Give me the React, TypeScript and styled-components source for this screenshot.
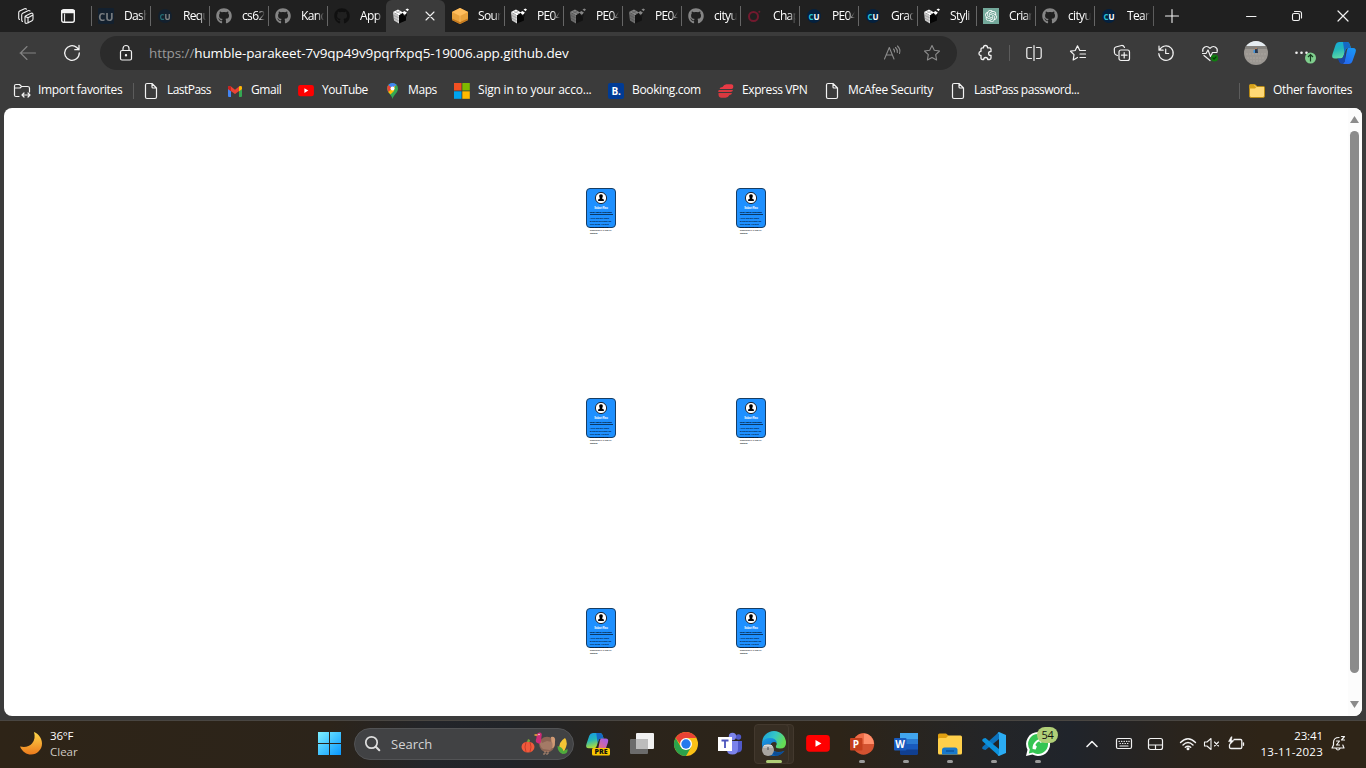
import React from "react";
import styled, { createGlobalStyle } from "styled-components";
import { FaGithub, FaPhoneAlt } from "react-icons/fa";
import { SiOpenai } from "react-icons/si";

const GlobalStyle = createGlobalStyle`
  * { box-sizing: border-box; }
  body { margin: 0; background: #3b3b3b; overflow: hidden; }
  svg { display: block; flex: none; overflow: visible; }
`;

const Screen = styled.div`
  width: 1366px;
  height: 768px;
  display: flex;
  flex-direction: column;
  font-family: "Open Sans", "Noto Sans", sans-serif;
  font-size: 12px;
  color: #fff;
  background: #3b3b3b;
  overflow: hidden;
  white-space: nowrap;
`;

/* ---------- tab strip ---------- */
const TabStrip = styled.div`
  height: 32px;
  display: flex;
  background: #202020;
`;
const StripButton = styled.div<{ $w: number }>`
  width: ${(p) => p.$w}px;
  height: 32px;
  display: flex;
  align-items: center;
  justify-content: center;
`;
const Tab = styled.div<{ $active?: boolean; $sep?: boolean }>`
  width: 59px;
  height: 32px;
  display: flex;
  align-items: center;
  padding-left: 7px;
  background: ${(p) => (p.$active ? "#3b3b3b" : "transparent")};
  border-radius: ${(p) => (p.$active ? "6px 6px 0 0" : "0")};
  background-image: ${(p) =>
    p.$sep ? "linear-gradient(#666, #666)" : "none"};
  background-size: 1px 20px;
  background-position: 0 6px;
  background-repeat: no-repeat;
`;
const TabTitle = styled.span`
  width: 23px;
  margin-left: 10px;
  overflow: hidden;
  line-height: 20px;
  letter-spacing: -0.65px;
  mask-image: linear-gradient(90deg, #000 70%, transparent 100%);
`;
const Favicon = styled.div<{ $dim?: boolean }>`
  width: 16px;
  height: 16px;
  flex: none;
  display: flex;
  align-items: center;
  justify-content: center;
  opacity: ${(p) => (p.$dim ? 0.45 : 1)};
`;
const CuBadge = styled.div<{ $square?: boolean }>`
  width: ${(p) => (p.$square ? 16 : 14)}px;
  height: ${(p) => (p.$square ? 16 : 14)}px;
  border-radius: ${(p) => (p.$square ? "1px" : "50%")};
  background: #04213f;
  display: flex;
  align-items: center;
  justify-content: center;
  font: 700 ${(p) => (p.$square ? 11 : 8)}px "Open Sans", sans-serif;
  color: ${(p) => (p.$square ? "#e0eaf2" : "#fff")};
`;
const Teal = styled.span`
  color: #27c4d6;
`;

/* ---------- toolbar ---------- */
const Toolbar = styled.div`
  height: 42px;
  display: flex;
  align-items: center;
`;
const Slot = styled.div<{ $w?: number }>`
  width: ${(p) => p.$w ?? 44}px;
  height: 42px;
  flex: none;
  display: flex;
  align-items: center;
  justify-content: center;
`;
const AddressBar = styled.div`
  width: 857px;
  height: 34px;
  margin: 0 7px 0 6px;
  border-radius: 17px;
  background: #2b2b2b;
  display: flex;
  align-items: center;
  padding: 0 5px 0 18px;
`;
const Url = styled.div`
  flex: 1;
  margin-left: 15px;
  font-size: 13.5px;
  line-height: 20px;
  letter-spacing: -0.1px;
`;
const Muted = styled.span`
  color: #9a9a9a;
`;
const Rule = styled.div<{ $l: number; $r: number; $h?: number }>`
  width: 1px;
  height: ${(p) => p.$h ?? 16}px;
  margin: 0 ${(p) => p.$r}px 0 ${(p) => p.$l}px;
  background: #5c5c5c;
`;
const StripRule = styled(Rule)`
  margin-top: 6px;
`;
const Avatar = styled.div`
  width: 24px;
  height: 24px;
  border-radius: 50%;
  overflow: hidden;
`;

/* ---------- favourites bar ---------- */
const FavBar = styled.div`
  height: 34px;
  display: flex;
  align-items: center;
  padding-left: 14px;
`;
const Fav = styled.div<{ $w: number; $ls?: number }>`
  width: ${(p) => p.$w}px;
  flex: none;
  display: flex;
  align-items: center;
  gap: 8px;
  letter-spacing: ${(p) => p.$ls ?? -0.35}px;
`;
const FavLabel = styled.span`
  line-height: 18px;
  padding-bottom: 2px;
`;
const BookingMark = styled.div`
  width: 16px;
  height: 16px;
  border-radius: 2px;
  background: #003b95;
  font-weight: 700;
  font-size: 10px;
  line-height: 16px;
  text-align: center;
`;

/* ---------- page ---------- */
const Page = styled.div`
  width: 1358px;
  height: 608px;
  margin-left: 4px;
  border-radius: 8px;
  background: #fff;
  display: flex;
  overflow: hidden;
`;
const Content = styled.div`
  flex: 1;
  display: grid;
  grid-template-columns: 30px 30px;
  grid-auto-rows: 40px;
  column-gap: 120px;
  row-gap: 170px;
  padding: 80px 0 0 582px;
`;
const Card = styled.div`
  width: 30px;
  height: 40px;
  border: 1px solid #173d63;
  border-radius: 4px;
  background: #1e90ff;
  display: flex;
  flex-direction: column;
  align-items: center;
  font-family: "Liberation Sans", sans-serif;
  color: #020a14;
`;
const CardPhoto = styled.div`
  margin-top: 3px;
  height: 12px;
`;
const CardName = styled.div`
  margin-top: 2px;
  font-size: 2.6px;
  line-height: 5px;
  font-weight: 700;
  color: #fff;
`;
const CardRole = styled.div`
  width: 23px;
  font-size: 2px;
  line-height: 3px;
  font-weight: 700;
  text-align: center;
  border-bottom: 1px solid #0b3a68;
  -webkit-text-stroke: 0.06px #020a14;
`;
const CardText = styled.div`
  width: 22px;
  margin-top: 2px;
  font-size: 2px;
  line-height: 2.9px;
  white-space: pre;
  -webkit-text-stroke: 0.03px #020a14;
`;
const Scrollbar = styled.div`
  width: 14px;
  background: #fcfcfc;
  display: flex;
  flex-direction: column;
  align-items: center;
  padding: 8px 1px 0 0;
`;
const Thumb = styled.div`
  width: 9px;
  height: 542px;
  margin: 8px 0 28px;
  border-radius: 5px;
  background: #8b8b8b;
`;

/* ---------- taskbar ---------- */
const Taskbar = styled.div`
  height: 48px;
  margin-top: 4px;
  padding-bottom: 2px;
  display: flex;
  align-items: center;
  border-top: 1px solid #494642;
  background: linear-gradient(
    90deg,
    #2e2417 0,
    #2c241a 330px,
    #23252a 430px,
    #212429 510px,
    #2b241b 640px,
    #2d2418 840px,
    #242527 985px,
    #20242b 1070px,
    #2a241d 1180px,
    #2e2417 1260px
  );
`;
const Weather = styled.div`
  width: 307px;
  padding-left: 19px;
  display: flex;
  align-items: center;
  gap: 8px;
`;
const WeatherText = styled.div`
  font-size: 11.5px;
  line-height: 16px;
  letter-spacing: -0.2px;
`;
const Soft = styled.div`
  color: #cfcac4;
  letter-spacing: 0;
`;
const Search = styled.div`
  width: 220px;
  height: 32px;
  margin: 0 2px 0 3px;
  padding: 0 4px 0 10px;
  border-radius: 16px;
  background: #414244;
  border: 1px solid #525355;
  display: flex;
  align-items: center;
  font-size: 13px;
  color: #d4d4d4;
`;
const SearchLabel = styled.span`
  flex: 1;
  margin-left: 11px;
`;
const TaskApp = styled.div<{ $active?: boolean; $dot?: boolean }>`
  width: 44px;
  height: 46px;
  flex: none;
  position: relative;
  display: flex;
  align-items: center;
  justify-content: center;
  &::after {
    content: "";
    position: absolute;
    bottom: 4px;
    left: ${(p) => (p.$active ? 14 : 19)}px;
    width: ${(p) => (p.$active ? 16 : 6)}px;
    height: 3px;
    border-radius: 2px;
    background: ${(p) =>
      p.$active ? "#b0cf78" : p.$dot ? "#9a9a9a" : "transparent"};
  }
`;
const ActiveFrame = styled.div<{ $back?: boolean }>`
  position: absolute;
  left: ${(p) => (p.$back ? 7 : 2)}px;
  top: 3px;
  width: 35px;
  height: 40px;
  border-radius: 4px;
  background: #372e23;
  border: 1px solid #43392e;
`;
const Over = styled.div`
  position: relative;
`;
const Count = styled.div`
  position: absolute;
  left: 21px;
  top: 6px;
  width: 21px;
  height: 16px;
  border-radius: 8px;
  background: #b0cf78;
  color: #111;
  font-size: 11px;
  line-height: 16px;
  text-align: center;
  letter-spacing: -0.3px;
`;
const Tray = styled.div`
  margin-left: 16px;
  display: flex;
  align-items: center;
`;
const Clock = styled.div`
  width: 75px;
  text-align: right;
  font-size: 11.5px;
  line-height: 16px;
  margin-right: 3px;
`;
const Digits = styled.div<{ $ls: number }>`
  letter-spacing: ${(p) => p.$ls}px;
`;

const Line = ({ w = 18, h = 18, c = "#f2f2f2", s = 1.2, children }: any) => (
  <svg width={w} height={h} viewBox={`0 0 ${w} ${h}`} fill="none" stroke={c} strokeWidth={s} strokeLinecap="round" strokeLinejoin="round">
    {children}
  </svg>
);

const Expo = () => (
  <svg width="16" height="16" viewBox="0 0 16 16">
    <path d="M0 4 5 1.500 10 4.500 6 7.500z" fill="#fff" />
    <path d="M0 4 6 7.500V15.500L1 12.500z" fill="#dedede" />
    <path d="M6 7.500 10 5v2l3 1.500v4L6 15.500z" fill="#050505" />
    <path d="M2 5v8M4 6.200v8M0 7l6 3M.5 10l5.500 3M2.500 2.800l5.500 3M7.500 2.800l-5 2.700" stroke="#808080" strokeWidth=".5" />
    <path d="M9 4.500 11.500 3l2.500 1.800-2 2.200zM12.500 1.500 14.300.6 16 1.500l-1.500 1.700z" fill="#fff" />
    <path d="M12 7 14 5v3l-2 1.500z" fill="#111" />
  </svg>
);
const Cube = () => (
  <svg width="16" height="16" viewBox="0 0 16 16">
    <path d="M8 0 16 4v8l-8 4-8-4V4z" fill="#e9a23c" />
    <path d="M8 0 16 4 8 8 0 4z" fill="#ffbd5c" />
    <path d="M0 10.500 8 14l8-3.500V12l-8 4-8-4z" fill="#c67a1e" />
    <path d="M8 8v6" stroke="#f5b65a" />
  </svg>
);
const Gpt = styled.div`
  width: 16px;
  height: 16px;
  background: #74a99b;
  color: #fff;
  display: flex;
  align-items: center;
  justify-content: center;
`;
const Chapter = () => (
  <svg width="16" height="16" viewBox="0 0 16 16" fill="none" stroke="#d5123f">
    <circle cx="6.500" cy="8.500" r="4.500" strokeWidth="2" />
    <circle cx="12.300" cy="3.800" r="1" fill="#c5123f" stroke="none" />
  </svg>
);
const Doc = () => (
  <Line w={16} h={16}>
    <path d="M2.500 2Q2.500.5 4 .5h5l4.500 4.500v9q0 1.500-1.500 1.500H4q-1.500 0-1.500-1.500zM9 .5V4q0 1 1 1h3.500" />
  </Line>
);
const YouTube = ({ w = 16 }: { w?: number }) => (
  <svg width={w} height={w * 0.7} viewBox="0 0 24 17">
    <rect width="24" height="17" rx="3.500" fill="#f00" />
    <path d="M9.500 5v7l6-3.500z" fill="#fff" />
  </svg>
);
const Gmail = () => (
  <svg width="14" height="11" viewBox="0 0 14 11">
    <path d="M0 2v8q0 1 1 1h2V4z" fill="#4285f4" />
    <path d="M14 2v8q0 1-1 1h-2V4z" fill="#34a853" />
    <path d="M0 1.500Q.5-.8 3 .6L7 3.700 11 .6q2.500-1.400 3 .9V3L7 8 0 3z" fill="#ea4335" />
    <path d="M11 .6q2.500-1.400 3 .9V3l-3 2.200z" fill="#fbbc04" />
    <path d="M0 1.500Q.5-.8 3 .6v4.600L0 3z" fill="#c5221f" />
  </svg>
);
const Pin = () => (
  <svg width="11" height="16" viewBox="0 0 11 16">
    <path d="M5.500 0A5.500 5.500 0 0 1 11 5.500C11 10 7 11 5.500 16 4.500 11 0 10 0 5.500A5.500 5.500 0 0 1 5.500 0z" fill="#34a853" />
    <path d="M1.300 2A5.500 5.500 0 0 1 9.500 1.800L5 7z" fill="#4285f4" />
    <path d="M1.300 2 5 5 1.500 9.500Q-1 5 1.300 2z" fill="#ea4335" />
    <path d="M1.300 9 8 2.500 7 8 3.500 11.500z" fill="#fbbc04" />
    <circle cx="5.500" cy="5.500" r="2" fill="#fff" />
  </svg>
);
const Ms = () => (
  <svg width="16" height="16" viewBox="0 0 16 16">
    <path d="M0 0h7.500v7.500H0z" fill="#f25022" />
    <path d="M8.300 0h7.500v7.500H8.300z" fill="#7fba00" />
    <path d="M0 8.300h7.500v7.500H0z" fill="#00a4ef" />
    <path d="M8.300 8.300h7.500v7.500H8.300z" fill="#ffb900" />
  </svg>
);
const Vpn = () => (
  <svg width="16" height="14" viewBox="0 0 16 14">
    <path d="M4.500 3Q6 .3 8.500.3h4.700q2.300 0 2.100 2.700 0 2-2 2H1.500Q2 3 4.500 3z" fill="#e83a45" />
    <path d="M1 6h14q-.3 2-2.500 2H.2Q.3 6 1 6zM.5 9H14q-.4 2-2.500 2-1.500 2.700-4 2.700H3Q.2 13.500.5 9z" fill="#da3940" />
  </svg>
);
const Folder = () => (
  <svg width="16" height="14" viewBox="0 0 16 14">
    <path d="M.5 1.500q0-1 1-1H6L8 2.500h6.500q1 0 1 1V12q0 1.500-1.500 1.500H2Q.5 13.500.5 12z" fill="#ffd875" stroke="#b98a12" />
    <path d="M.5 4.500H6L8 2.500H6L5 .5H1.500q-1 0-1 1z" fill="#d7a21b" />
  </svg>
);
const Copilot = ({ s = 24, warm }: { s?: number; warm?: boolean }) => (
  <svg width={s} height={s} viewBox="0 0 24 24">
    <defs>
      <linearGradient id={warm ? "w1" : "c1"} x2=".3" y2="1">
        <stop stopColor={warm ? "#1598e8" : "#12a8e0"} />
        <stop offset=".5" stopColor="#24b6b8" />
        <stop offset="1" stopColor={warm ? "#b3dd38" : "#5ed8a5"} />
      </linearGradient>
      <linearGradient id={warm ? "w2" : "c2"} x1="1" x2=".4" y2="1">
        <stop stopColor={warm ? "#9b5cf5" : "#179cf5"} />
        <stop offset="1" stopColor={warm ? "#f97367" : "#246bf0"} />
      </linearGradient>
    </defs>
    <path d="M11 1h4q2 0 2.600 2L19 7h-3q-2 0-2.500 2L11.500 15q-.8 2.500-3 2.500H3q-4 0-2.500-4.500L3.500 4q1-3 4-3z" fill={`url(#${warm ? "w1" : "c1"})`} />
    <path d="M11 1h4q2 0 2.600 2L19 7h-3q-2 0-2.500 2L12.500 12z" fill="#1568c4" />
    <path d="M16 7h5q4 0 2.500 4.500L20.500 20q-1 3-4 3H10q2-.5 2.600-2.500L15 9z" fill={`url(#${warm ? "w2" : "c2"})`} />
    {!warm && <path d="M5 17.500h3.500q2.200 0 3-2.500l2-6-.5 11q-1.500 4-4.500 2.500Q7 22 6.500 19z" fill="#1747a6" />}
  </svg>
);
const Person = () => (
  <svg width="12" height="12" viewBox="0 0 12 12">
    <circle cx="6" cy="6" r="5.600" fill="#fff" stroke="#12161c" strokeWidth=".9" />
    <path d="M6 2.200c1.300 0 1.900.9 1.800 2.100-.1 1-.6 1.600-.8 2.200l1.500.8q.5.400.4 1.600H3.100q-.1-1.200.4-1.600l1.500-.8c-.2-.6-.7-1.200-.8-2.200C4.100 3.100 4.700 2.200 6 2.200z" fill="#000" />
  </svg>
);

type TabInfo = { t?: string; k: string; dim?: boolean; sep?: boolean };
const tabs: TabInfo[] = [
  { t: "Dash", k: "cusq", dim: true, sep: true },
  { t: "Requ", k: "cu", dim: true, sep: true },
  { t: "cs62", k: "gh", sep: true },
  { t: "Kand", k: "gh", sep: true },
  { t: "App", k: "ghd", sep: true },
  { k: "active" },
  { t: "Sour", k: "cube" },
  { t: "PE04", k: "expo", sep: true },
  { t: "PE04", k: "expo", dim: true, sep: true },
  { t: "PE04", k: "expo", dim: true, sep: true },
  { t: "cityu", k: "gh", sep: true },
  { t: "Chap", k: "ch", dim: true, sep: true },
  { t: "PE04", k: "cu", sep: true },
  { t: "Grad", k: "cu", sep: true },
  { t: "Styli", k: "expo", sep: true },
  { t: "Criar", k: "gpt", sep: true },
  { t: "cityu", k: "gh", sep: true },
  { t: "Team", k: "cu", sep: true },
];
const tabIcon = (k: string) => {
  if (k === "gh") return <FaGithub size={16} color="#858585" />;
  if (k === "ghd") return <FaGithub size={16} color="#101010" />;
  if (k === "cube") return <Cube />;
  if (k === "ch") return <Chapter />;
  if (k === "gpt") return <Gpt><SiOpenai size={12} /></Gpt>;
  if (k === "cu") return <CuBadge><Teal>C</Teal>U</CuBadge>;
  if (k === "cusq") return <CuBadge $square>CU</CuBadge>;
  return <Expo />;
};

const favs = [
  { t: "LastPass", w: 84, i: <Doc />, ls: -0.55 },
  { t: "Gmail", w: 71, i: <Gmail />, ls: -0.45 },
  { t: "YouTube", w: 86, i: <YouTube />, ls: -0.5 },
  { t: "Maps", w: 70, i: <Pin />, ls: -0.4 },
  { t: "Sign in to your acco...", w: 154, i: <Ms />, ls: -0.2 },
  { t: "Booking.com", w: 110, i: <BookingMark>B.</BookingMark>, ls: -0.35 },
  { t: "Express VPN", w: 106, i: <Vpn />, ls: -0.4 },
  { t: "McAfee Security", w: 126, i: <Doc />, ls: -0.3 },
  { t: "LastPass password...", w: 289, i: <Doc />, ls: -0.5 },
];

const about = "I have two daily goals,\nto provide developer the\nlearn things. It is built,\nlearn new things and\nexperience in UI and UX\nfrontend";

export default function App() {
  return (
    <Screen>
      <GlobalStyle />
      <TabStrip>
        <StripButton $w={52}>
          <Line w={16} h={16} s={1.1}>
            <path d="M7.500 8 12.500 5.500q2.500-1 2.500 1V11q0 1.200-1 1.700L9.500 15Q7 16 7 14V9q0-.7.500-1zM7.300 8.500 10 9.800l4.500-2.500M10 9.800V15M4.500 13.500Q3.700 13 3.700 12V7q0-1.200 1-1.700L10 2.700q1.200-.5 2 .3M1.500 11.500Q.7 11 .7 10V4.700Q.7 3.500 1.700 3L6.500.8Q7.700.3 8.500 1.200" />
          </Line>
        </StripButton>
        <StripButton $w={32}>
          <Line w={14} h={14} s={1.4}>
            <rect x=".7" y=".7" width="12.600" height="12.600" rx="2" />
            <path d="M1 3.200h12M1 2h12" strokeWidth="2" />
            <path d="M3.600 5v8" strokeWidth="1" />
          </Line>
        </StripButton>
        <StripButton $w={7} />
        {tabs.map((tab, n) =>
          tab.k === "active" ? (
            <Tab key={n} $active>
              <Favicon><Expo /></Favicon>
              <StripButton $w={7} />
              <StripButton $w={36}>
                <Line w={8} h={8} s={1.1}><path d="M0 0l8 8M8 0 0 8" /></Line>
              </StripButton>
            </Tab>
          ) : (
            <Tab key={n} $sep={tab.sep}>
              <Favicon $dim={tab.dim}>{tabIcon(tab.k)}</Favicon>
              <TabTitle>{tab.t}</TabTitle>
            </Tab>
          )
        )}
        <StripRule $l={0} $r={0} $h={20} />
        <StripButton $w={36}>
          <Line w={14} h={14} s={1.1}><path d="M7 .5v13M.5 7h13" /></Line>
        </StripButton>
        <StripButton $w={38} />
        <StripButton $w={46}><Line w={10} h={10} s={1}><path d="M.5 5.500h9.500" /></Line></StripButton>
        <StripButton $w={46}>
          <Line w={10} h={10} s={1.1}>
            <rect x=".5" y="2.500" width="7" height="7" rx="1.500" />
            <path d="M2.500.5H7.500Q9.500.5 9.500 2.500V7" />
          </Line>
        </StripButton>
        <StripButton $w={46}><Line w={10} h={10} s={1.2}><path d="M0 0l10 10M10 0 0 10" /></Line></StripButton>
      </TabStrip>

      <Toolbar>
        <Slot $w={56}>
          <Line w={16} h={14} c="#838383" s={1.1}><path d="M0 7h15.500M7 .5.5 7 7 13.500" /></Line>
        </Slot>
        <Slot $w={32}>
          <Line w={16} h={16} s={1.3}>
            <path d="M15.300 8A7.300 7.300 0 1 1 12.800 2.500L15 4.700M15 .5V4.700H10.800" />
          </Line>
        </Slot>
        <Slot $w={6} />
        <AddressBar>
          <Line w={16} h={16}>
            <rect x="2.500" y="5.500" width="11" height="9.500" rx="1.500" />
            <path d="M5 5.500V3.500a3 3 0 0 1 6 0v2" />
            <circle cx="8" cy="10.200" r=".6" fill="#fff" />
          </Line>
          <Url><Muted>https://</Muted>humble-parakeet-7v9qp49v9pqrfxpq5-19006.app.github.dev</Url>
          <Slot $w={40}>
            <Line w={16} h={14} c="#8c8c8c" s={1.1}>
              <path d="M.5 13 5.300 1.500 10 13M2.300 9h6M9.500 3q1.300 1.200 1 3M11.500 1.500Q14 4 13.300 6.500M13.500 0Q17 3.500 15.500 7.500" />
            </Line>
          </Slot>
          <Slot $w={40}>
            <Line w={16} h={16} c="#8c8c8c" s={1.1}>
              <path d="M8 .5 10.300 5.300l5.200.7-3.800 3.700.9 5.300L8 12.500 3.400 15l.9-5.300L.5 6l5.200-.7z" />
            </Line>
          </Slot>
        </AddressBar>
        <Slot>
          <Line w={16} h={16} s={1.3}>
            <path d="M5.500 2.800V2.500a2 2 0 0 1 4.000 0v.3H11.500q1.500 0 1.500 1.500V6.500h-.5a1.900 1.900 0 0 0 0 3.800H13v2.700q0 1.500-1.500 1.500H9.700a2 2 0 0 0-4.000 0H4.500Q3 14.500 3 13v-2.500H2.500a2.200 2.200 0 0 1 0-4.200H3V4.300q0-1.500 1.500-1.500z" />
          </Line>
        </Slot>
        <Rule $l={1} $r={2} />
        <Slot>
          <Line w={16} h={16} s={1.2}>
            <path d="M5.500 2.500H2.500Q.8 2.500.8 4.200v7.600q0 1.700 1.700 1.700h3M10.500 2.500h3q1.700 0 1.700 1.700v7.600q0 1.700-1.700 1.700h-3M8 .5v15" />
          </Line>
        </Slot>
        <Slot>
          <Line w={16} h={16} s={1.2}>
            <path d="M15.500 5.500H9.800L7.500.800 5.200 5.500.5 6.200 4 9.600 3.200 15 7.500 12.500M10 9h5.500M10 12.500h5.500" />
          </Line>
        </Slot>
        <Slot>
          <Line w={16} h={16} s={1.2}>
            <rect x="5" y="5" width="10.500" height="10.500" rx="2" />
            <path d="M10.200 7.500v5.500M7.500 10.200H13M3.500 10.500 2.200 10Q.8 9.500.5 8L.3 4Q.3 2.500 1.800 2L7.500.5Q9.500.2 10.500 2.500" />
          </Line>
        </Slot>
        <Slot>
          <Line w={16} h={16} s={1.2}>
            <path d="M1.500 5A7.200 7.200 0 1 1 .8 8.500M1 1v4.200h4.200M7.700 4v4.500h3" />
          </Line>
        </Slot>
        <Slot>
          <Line w={16} h={16} s={1.2}>
            <path d="M.8 6.500C0 2.500 4.500-.5 8 3.300 11.500-.5 16 2.500 15.200 6.500M.5 8.500h3.500l2-3.500 2.500 6.500 2-4h4.500M2 10.500 8 15.500" />
            <circle cx="12.500" cy="13" r="3.600" fill="#107c10" stroke="none" />
            <path d="M11 13l1 1 2-2" stroke="#063d06" />
          </Line>
        </Slot>
        <Slot $w={48}>
          <Avatar>
            <svg width="24" height="24" viewBox="0 0 24 24">
              <path d="M0 0h24v24H0z" fill="#9b9792" />
              <path d="M0 0h24v5H0z" fill="#e6edf2" />
              <path d="M0 5h24v3H0z" fill="#83817d" />
              <path d="M2 13h21M3 17h18M6 20h12" stroke="#aaa59f" strokeDasharray="2 1" />
              <path d="M11 7.500h2.500l.5 4.500h-3z" fill="#253750" />
              <path d="M9.500 9h1.500v3H9.500z" fill="#3f93dd" />
              <circle cx="12" cy="7.500" r=".8" fill="#d88d56" />
            </svg>
          </Avatar>
        </Slot>
        <Slot>
          <svg width="20" height="20" viewBox="0 0 20 20">
            <g fill="#f2f2f2"><circle cx="4.500" cy="9.700" r="1.300" /><circle cx="9.500" cy="9.700" r="1.300" /><circle cx="14.500" cy="9.700" r="1.300" /></g>
            <circle cx="18.500" cy="15" r="5.500" fill="#7fce8d" />
            <path d="M18.500 18.500V12M16 14l2.500-2.500L21 14" stroke="#173c20" fill="none" strokeWidth="1.200" />
          </svg>
        </Slot>
        <Slot $w={40}><Copilot /></Slot>
      </Toolbar>

      <FavBar>
        <Fav $w={119} $ls={-0.35}>
          <Favicon>
            <Line w={16} h={14}>
              <path d="M5 12.500H2Q.5 12.500.5 11V2Q.5.5 2 .5H5.500L7.500 2.500H13.500Q15.500 2.500 15.500 4V8M.5 4H6L7.500 2.500M8 11h8M10 9l-2 2 2 2M14 9l2 2-2 2" />
            </Line>
          </Favicon>
          <FavLabel>Import favorites</FavLabel>
        </Fav>
        <Rule $l={0} $r={9} />
        {favs.map((f, n) => (
          <Fav key={n} $w={f.w} $ls={f.ls}><Favicon>{f.i}</Favicon><FavLabel>{f.t}</FavLabel></Fav>
        ))}
        <Rule $l={0} $r={9} />
        <Fav $w={110}><Favicon><Folder /></Favicon><FavLabel>Other favorites</FavLabel></Fav>
      </FavBar>

      <Page>
        <Content>
          {[0, 1, 2, 3, 4, 5].map((n) => (
            <Card key={n}>
              <CardPhoto><Person /></CardPhoto>
              <CardName>Sabari Rao</CardName>
              <CardRole>React Native Developer</CardRole>
              <CardText>{about}</CardText>
            </Card>
          ))}
        </Content>
        <Scrollbar>
          <svg width="9" height="7" viewBox="0 0 9 7"><path d="M4.500 0 9 7H0z" fill="#8b8b8b" /></svg>
          <Thumb />
          <svg width="9" height="7" viewBox="0 0 9 7"><path d="M4.500 7 9 0H0z" fill="#8b8b8b" /></svg>
        </Scrollbar>
      </Page>

      <Taskbar>
        <Weather>
          <svg width="23" height="23" viewBox="0 0 23 23">
            <defs><linearGradient id="moon" x2="0" y2="1"><stop stopColor="#ffd84a" /><stop offset="1" stopColor="#ec7a1c" /></linearGradient></defs>
            <path d="M15 0Q17 7 13 11.500 9 16 1 14.500C3.500 20 7.500 22.500 12 22.500A11 11 0 0 0 23 11.500C23 6 19.500 2 15 0z" fill="url(#moon)" />
          </svg>
          <WeatherText>36°F<Soft>Clear</Soft></WeatherText>
        </Weather>
        <TaskApp>
          <svg width="23" height="23" viewBox="0 0 23 23">
            <defs><linearGradient id="win" gradientUnits="userSpaceOnUse" x1="0" y1="0" x2="23" y2="23"><stop stopColor="#7df0ff" /><stop offset="1" stopColor="#0897ff" /></linearGradient></defs>
            <path d="M0 0h11v11H0zM12 0h11v11H12zM0 12h11v11H0zM12 12h11v11H12z" fill="url(#win)" />
          </svg>
        </TaskApp>
        <Search>
          <Line w={15} h={15} s={1.7} c="#dedede"><circle cx="6.500" cy="6.500" r="5.700" /><path d="M10.800 10.800l3.500 3.500" strokeWidth="2" /></Line>
          <SearchLabel>Search</SearchLabel>
          <svg width="48" height="24" viewBox="0 0 48 24">
            <ellipse cx="7" cy="15" rx="6.500" ry="5.500" fill="#ef5a3c" />
            <path d="M5 10q-2 5 0 10M9 10q2 5 0 10" stroke="#c93b26" fill="none" />
            <path d="M6 10l1-3 2 1-.5 2z" fill="#78a53b" />
            <circle cx="26" cy="12.500" r="7.800" fill="#8c6554" />
            <path d="M30 5q5-1 4 5 0 6-3 6z" fill="#d09a74" />
            <path d="M19 6q-2 7 3 11l7 1q4-3 2-8l-5-1-5 2z" fill="#a47a66" />
            <path d="M15.500 3q1-3 3.500-2.500 2.500.5 1.500 4L20 10q-1 3-4.500.5-1.500-1.500 0-4.500z" fill="#cc2b76" />
            <circle cx="18" cy="2.500" r=".7" fill="#fff" />
            <path d="M13.500 3h3" stroke="#f0a73a" strokeWidth="1.500" />
            <path d="M24 19v3h-2m5-3v3h-2" stroke="#b58b73" fill="none" />
            <path d="M38 18q0-9 6-12 4 4-1 14z" fill="#f5c534" />
            <path d="M36.500 14q5 1 6 5l4-2q1 5-5 5-5-2-5-8z" fill="#4eaa3c" />
          </svg>
        </Search>
        <TaskApp>
          <svg width="24" height="24" viewBox="0 0 24 24">
            <g transform="scale(.93)"><Copilot warm /></g>
            <rect x="6" y="16" width="18" height="7.500" rx="1.500" fill="#fbc700" />
            <text x="15" y="22.300" fontSize="7" fontWeight="800" textAnchor="middle" fill="#111" fontFamily="Open Sans">PRE</text>
          </svg>
        </TaskApp>
        <TaskApp>
          <svg width="24" height="24" viewBox="0 0 24 24">
            <rect x="0" y="7" width="18" height="15" rx="1" fill="#6b6b6b" />
            <rect x="6" y="1" width="18" height="16" rx="1" fill="#f1f1f1" />
            <path d="M6 7h12v10H6z" fill="#bcbcbc" />
          </svg>
        </TaskApp>
        <TaskApp>
          <svg width="24" height="24" viewBox="0 0 24 24">
            <circle cx="12" cy="12" r="12" fill="#fbc116" />
            <path d="M1.600 6A12 12 0 0 1 22.400 6H12L8 14.500z" fill="#e94235" />
            <path d="M1.600 6A12 12 0 0 0 12 24L17.200 15 12 18 6.800 15z" fill="#2ba24c" />
            <circle cx="12" cy="12" r="6" fill="#fff" />
            <circle cx="12" cy="12" r="4.700" fill="#2579ed" />
          </svg>
        </TaskApp>
        <TaskApp>
          <svg width="24" height="24" viewBox="0 0 24 24">
            <circle cx="20.500" cy="5" r="2.700" fill="#5059c9" />
            <path d="M17 9h7v7q0 4-4 4.500h-3z" fill="#5059c9" />
            <circle cx="14.500" cy="4.500" r="3.700" fill="#7b83eb" />
            <path d="M8 9h12v8q0 5.500-5.500 5.500T9 18z" fill="#7b83eb" />
            <rect x="0" y="5" width="14" height="14" fill="#fff" />
            <path d="M3.500 8.500h7M7 8.500V16" stroke="#4b53bc" strokeWidth="1.800" />
          </svg>
        </TaskApp>
        <TaskApp $active>
          <ActiveFrame $back />
          <ActiveFrame />
          <Over>
            <svg width="24" height="24" viewBox="0 0 24 24">
              <defs>
                <linearGradient id="e1" x2="1" y2=".4"><stop stopColor="#169ddc" /><stop offset=".55" stopColor="#35c6c6" /><stop offset="1" stopColor="#65dc55" /></linearGradient>
                <linearGradient id="e2" x2=".6" y2="1"><stop stopColor="#1a9be8" /><stop offset="1" stopColor="#0c5cae" /></linearGradient>
              </defs>
              <path d="M0 11A12 12 0 0 1 24 11q0 5.500-6 5.500-5 0-4-2.500Q16 11 12.500 9 7 6 0 11z" fill="url(#e1)" />
              <path d="M0 11Q2 6 8 6q6 0 7 5-3-2-5.500 0Q8 13 9 16q3 6 13.500 3-4 5-10.500 5A12 12 0 0 1 0 11z" fill="url(#e2)" />
              <path d="M9 12q-1 7 6 8.300 4 .5 7.500-1.800-4 5.500-9 5.200Q7 21 9 12z" fill="#0b4d96" />
              <circle cx="6" cy="18" r="6" fill="#aaa6a1" />
              <path d="M1 15h10M2 13.500h8" stroke="#d5d9dd" /><path d="M6 15v3" stroke="#454d58" />
            </svg>
          </Over>
        </TaskApp>
        <TaskApp><YouTube w={24} /></TaskApp>
        <TaskApp $dot>
          <svg width="24" height="24" viewBox="0 0 24 24">
            <circle cx="13.500" cy="12" r="10.700" fill="#d35230" />
            <path d="M13.500 1.300A10.700 10.700 0 0 1 24 12H13.500z" fill="#ff8f6b" />
            <path d="M13.500 1.300A10.700 10.700 0 0 0 3 12h10.500z" fill="#ed6c47" />
            <rect x="0" y="6" width="12.500" height="12.500" rx="1" fill="#c43e1c" />
            <text x="6" y="15.800" fontSize="10" fontWeight="700" textAnchor="middle" fill="#fff" fontFamily="Open Sans">P</text>
          </svg>
        </TaskApp>
        <TaskApp $dot>
          <svg width="24" height="24" viewBox="0 0 24 24">
            <rect x="6" y="1" width="18" height="22" rx="1.500" fill="#103f91" />
            <path d="M6 1h18v6H6z" fill="#41a5ee" /><path d="M6 7h18v5H6z" fill="#2b7cd3" /><path d="M6 12h18v5.500H6z" fill="#185abd" />
            <rect x="0" y="6" width="12.500" height="12.500" rx="1" fill="#185abd" />
            <text x="6.200" y="15.800" fontSize="10" fontWeight="700" textAnchor="middle" fill="#fff" fontFamily="Open Sans">W</text>
          </svg>
        </TaskApp>
        <TaskApp $dot>
          <svg width="24" height="24" viewBox="0 0 24 24">
            <path d="M0 3q0-1.500 1.500-1.500H8L11 4v5H0z" fill="#e0a011" />
            <path d="M1.500 6H8l2.500-2.500h12Q24 3.500 24 5v16q0 1.500-1.500 1.500h-21Q0 22.500 0 21V7.500Q0 6 1.500 6z" fill="#ffd04b" />
            <path d="M4 22.500V18q0-2.500 2.500-2.500h10.500q2.500 0 2.500 2.500v4.500z" fill="#1979ca" />
            <path d="M8 19h8" stroke="#0c559c" strokeWidth="1.500" />
          </svg>
        </TaskApp>
        <TaskApp $dot>
          <svg width="24" height="24" viewBox="0 0 24 24">
            <path d="M17 0v7L3.500 18 1.500 17.500.3 16.300v-1.200z" fill="#0c72bd" />
            <path d="M17 24v-7L3.500 6 1.500 6.500.3 7.700v1.200z" fill="#0c91dc" />
            <path d="M17 0l7 3v18l-7 3-1.500-1 1.500-1V2l-1.500-1z" fill="#2bacf3" />
          </svg>
        </TaskApp>
        <TaskApp $dot>
          <svg width="24" height="24" viewBox="0 0 24 24">
            <path d="M12 0a12 12 0 1 1-5.500 22.600L0 24l1.500-6.300A12 12 0 0 1 12 0z" fill="#fff" />
            <path d="M12 2a10 10 0 1 1-5 18.600L2.800 21.500l1-4A10 10 0 0 1 12 2z" fill="#35c553" />
            <g transform="translate(6.500 6.500) rotate(90 5.500 5.500)"><FaPhoneAlt size={11} color="#fff" /></g>
          </svg>
          <Count>54</Count>
        </TaskApp>
        <Tray>
          <StripButton $w={32}><Line w={10} h={6} s={1.6}><path d="M0 5.500 5 .5l5 5" /></Line></StripButton>
          <StripButton $w={32}>
            <Line w={16} h={11} s={1.2}>
              <rect x=".5" y=".5" width="15" height="10" rx="1.500" />
              <path d="M3 3.300h.4M5.500 3.300h.4M8 3.300h.4M10.500 3.300h.4M12.800 3.300h.4M4 5.500h.4M6.500 5.500h.4M9 5.500h.4M11.500 5.500h.4M4 8h8" />
            </Line>
          </StripButton>
          <StripButton $w={31}>
            <Line w={15} h={12} s={1.2}>
              <rect x=".5" y=".5" width="14" height="11" rx="2" /><path d="M.5 7h14M7.500 7v4.500" />
            </Line>
          </StripButton>
          <StripButton $w={5} />
          <StripButton $w={24}>
            <Line w={16} h={12} s={1.4}>
              <path d="M.5 4.500Q8-3 15.500 4.500M3 7q5-4.800 10 0M5.300 9.300Q8 7 10.700 9.300" /><circle cx="8" cy="10.800" r=".8" fill="#fff" />
            </Line>
          </StripButton>
          <StripButton $w={24}>
            <Line w={16} h={12} s={1.1}>
              <path d="M.5 4v4h2.500L7 11.500V.5L3 4zM10.500 4l4 4M14.500 4l-4 4" />
            </Line>
          </StripButton>
          <StripButton $w={24}>
            <Line w={16} h={13} s={1.3}>
              <path d="M6 2.500h6.500q1.300 0 1.300 1.300v6.400q0 1.300-1.300 1.300H3Q1.500 11.500 1.500 10V8M15.500 5.800v2.500" />
              <path d="M3 0 .5 4.500h2L1.500 8 6 3.500H3.500L4 0z" fill="#fff" strokeWidth=".5" />
            </Line>
          </StripButton>
          <Clock><Digits $ls={-0.1}>23:41</Digits><Digits $ls={0.25}>13-11-2023</Digits></Clock>
          <StripButton $w={24}>
            <Line w={15} h={15} s={1.2}>
              <path d="M8 1.500Q2.500 1.500 2.500 6.500V9L1 12h12l-1.200-3M5 12.500Q7 15.500 9 12.500M5.500 5h3L5.500 9h3M10.500.5H13.500L10.500 4h3" />
            </Line>
          </StripButton>
        </Tray>
      </Taskbar>
    </Screen>
  );
}
